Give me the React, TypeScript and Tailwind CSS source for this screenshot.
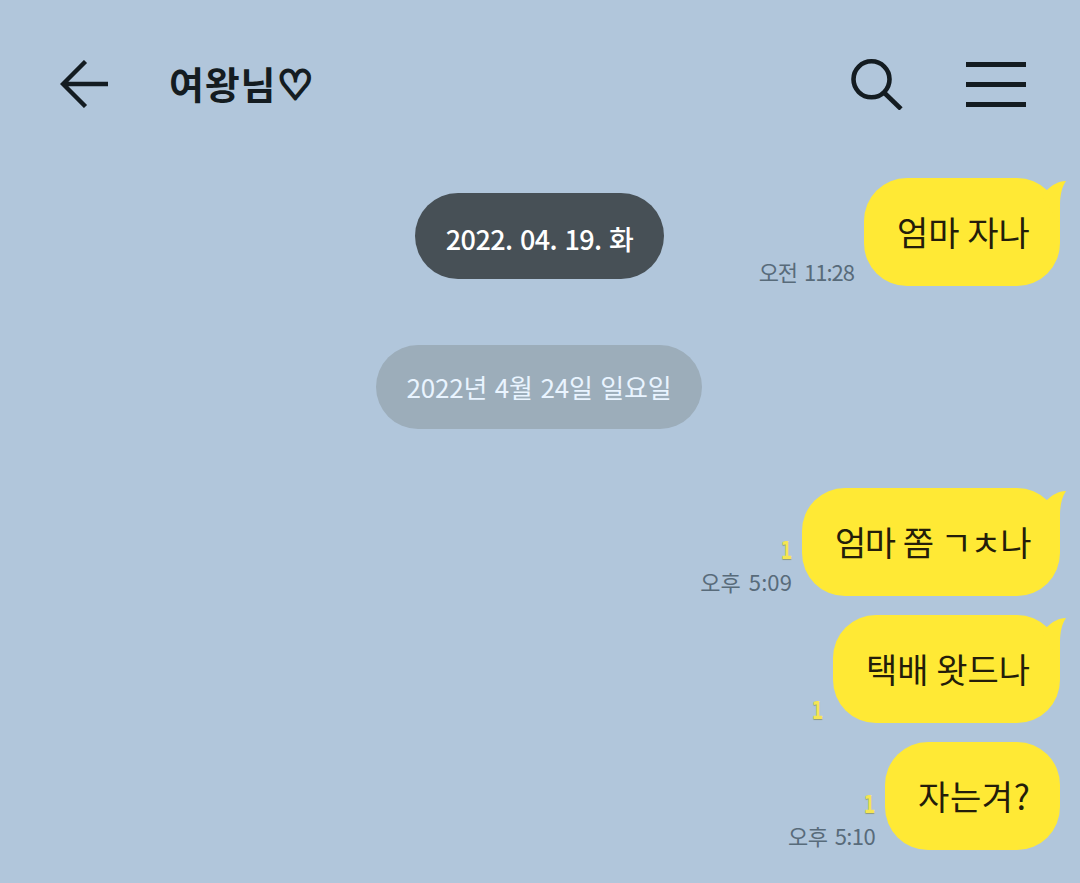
type Message = {
  text: string;
  time?: string;
  timeSpacing?: string;
  unread?: boolean;
  tail?: boolean;
  width: string;
  spacing?: string;
};

const firstMessage: Message = {
  text: "엄마 자나",
  time: "오전 11:28",
  timeSpacing: "tracking-[-1px] [word-spacing:3px]",
  tail: true,
  width: "w-[196px]",
};

const messages: Message[] = [
  {
    text: "엄마 쫌 ㄱㅊ나",
    time: "오후 5:09",
    timeSpacing: "tracking-[0.1px] [word-spacing:3px]",
    unread: true,
    tail: true,
    width: "w-[258px]",
    spacing: "tracking-[-1.5px] [word-spacing:2px]",
  },
  { text: "택배 왓드나", unread: true, tail: true, width: "w-[227px]" },
  {
    text: "자는겨?",
    time: "오후 5:10",
    timeSpacing: "tracking-[-0.6px] [word-spacing:3px]",
    unread: true,
    width: "w-[175px]",
    spacing: "tracking-[0.6px]",
  },
];

function Tail() {
  return (
    <svg
      className="absolute top-0 -right-[6px]"
      width="24"
      height="46"
      viewBox="0 0 24 46"
      fill="#ffe935"
    >
      <path d="M0 18 L5 12 C11 6.5 16 3.5 24 3 C20 8.5 18.2 17 18 26 L18 46 Z" />
    </svg>
  );
}

function Bubble({ text, time, timeSpacing, unread, tail, width, spacing }: Message) {
  return (
    <div className="flex items-end justify-end pr-5">
      <div className="flex flex-col items-end pr-[10px]">
        {unread && (
          <span
            className={`origin-right scale-x-75 font-['DejaVu_Sans_Mono',monospace] text-[25px] leading-[22px] font-bold text-[#f5e552] [text-shadow:0_1px_1px_#8e9a7a] ${
              time ? "mb-[8px]" : "mb-px"
            }`}
          >
            1
          </span>
        )}
        {time && (
          <span
            className={`mb-[4px] text-[22px] leading-[22px] whitespace-pre text-[#586b7a] ${timeSpacing ?? ""}`}
          >
            {time}
          </span>
        )}
      </div>
      <div
        className={`relative flex h-[108px] items-center rounded-[43px] bg-[#ffe935] pl-[33px] pb-px ${width}`}
      >
        <span
          className={`text-[34px] leading-none whitespace-nowrap text-[#241d0a] ${spacing ?? ""}`}
        >
          {text}
        </span>
        {tail && <Tail />}
      </div>
    </div>
  );
}

function Header() {
  return (
    <header className="flex h-[168px] items-center pr-[54px] pl-[60px] text-[#141c21]">
      <svg
        width="48"
        height="48"
        viewBox="0 0 48 48"
        fill="none"
        stroke="currentColor"
        strokeWidth="4.4"
      >
        <path d="M25.5 1.5 L3 24 L25.5 46.5 M3 24 H48" />
      </svg>
      <h1 className="ml-[61px] flex items-center pb-[2px] text-[38px] leading-none font-bold tracking-[0.8px]">
        여왕님
        <span className="mt-[3px] ml-px font-['DejaVu_Sans',sans-serif] text-[40px] [-webkit-text-stroke:3px_#141c21]">
          ♡
        </span>
      </h1>
      <svg
        className="ml-auto"
        width="54"
        height="52"
        viewBox="0 0 54 52"
        fill="none"
        stroke="currentColor"
        strokeWidth="4.6"
      >
        <circle cx="20.5" cy="21.3" r="18" />
        <path d="M33 34.5 L50 51" />
      </svg>
      <div className="ml-[61px] flex w-[60px] flex-col gap-[15px]">
        <span className="h-[5px] bg-current" />
        <span className="h-[5px] bg-current" />
        <span className="h-[5px] bg-current" />
      </div>
    </header>
  );
}

export default function App() {
  return (
    <div className="h-[883px] w-[1080px] overflow-hidden bg-[#b1c6db] font-['Noto_Sans_CJK_KR',sans-serif]">
      <Header />
      <main className="flex flex-col pt-[10px]">
        <div className="relative">
          <Bubble {...firstMessage} />
          {/* floating scroll date */}
          <div className="absolute top-[15px] left-[415px] flex h-[86px] w-[249px] items-center justify-center rounded-full bg-[#475056] pt-[5px] text-[27px] leading-none font-medium tracking-[-0.6px] whitespace-nowrap text-white [word-spacing:2px]">
            2022. 04. 19. 화
          </div>
        </div>
        <div className="mt-[59px] ml-[376px] flex h-[84px] w-[326px] items-center justify-center rounded-full bg-[#9cadba] text-[26px] leading-none tracking-[-0.2px] whitespace-nowrap text-[#e9f4ff] [word-spacing:2px]">
          2022년 4월 24일 일요일
        </div>
        <div className="mt-[59px] flex flex-col gap-[19px]">
          {messages.map((m) => (
            <Bubble key={m.text} {...m} />
          ))}
        </div>
      </main>
    </div>
  );
}
